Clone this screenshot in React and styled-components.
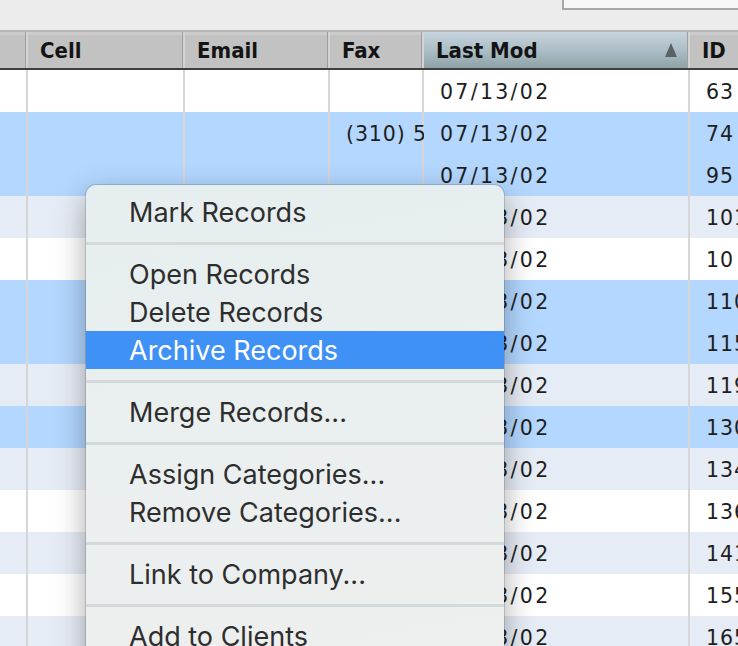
import React from 'react';
import styled, { createGlobalStyle } from 'styled-components';

const Global = createGlobalStyle`
  html, body { margin: 0; padding: 0; background: #ececec; }
  #root { width: 738px; height: 646px; }
`;

const COLS = '28px 157px 145px 94px 266px 1fr';

const Page = styled.div`
  position: relative;
  width: 738px;
  height: 646px;
  overflow: hidden;
  background: #ececec;
  display: flex;
  flex-direction: column;
`;

const TopBar = styled.div`
  flex: none;
  height: 30px;
  display: flex;
  justify-content: flex-end;
  align-items: flex-start;
`;

const SearchBox = styled.div`
  width: 176px;
  height: 10px;
  box-sizing: border-box;
  background: #f7f7f7;
  border-left: 2px solid #a7a7a7;
  border-bottom: 2px solid #a7a7a7;
`;

const HeaderRow = styled.div`
  flex: none;
  display: grid;
  grid-template-columns: ${COLS};
  height: 40px;
  box-sizing: border-box;
  border-top: 2px solid #b5b5b5;
  border-bottom: 2px solid #3e3e3e;
`;

const HeaderCell = styled.div`
  display: flex;
  align-items: center;
  justify-content: space-between;
  padding: 0 13px 0 12px;
  overflow: hidden;
  white-space: nowrap;
  font-family: "DejaVu Sans Condensed", "DejaVu Sans", sans-serif;
  font-weight: bold;
  font-size: 22px;
  color: #141414;
  background: ${p => p.$active
    ? 'linear-gradient(#c7d3dd, #a9bcc5 55%, #8ea2a6)'
    : 'linear-gradient(#cbcbcb 0, #cbcbcb 3px, #c2c2c2 3px)'};
  box-shadow: ${p => p.$last ? 'none' : 'inset -2px 0 0 #d3d3d3, inset -3px 0 0 #9e9e9e'};
`;

const SortArrow = styled.span`
  width: 0;
  height: 0;
  border-left: 6.5px solid transparent;
  border-right: 6.5px solid transparent;
  border-bottom: 14px solid #5b6265;
  margin-top: -1px;
`;

const Body = styled.div`
  flex: 1;
  background: #ffffff;
`;

const rowBg = { white: '#ffffff', alt: '#e6ecf5', sel: '#b3d7ff' };

const Row = styled.div`
  display: grid;
  grid-template-columns: ${COLS};
  height: 42px;
  background: ${p => rowBg[p.$kind]};
`;

const Cell = styled.div`
  padding: 2px 0 0 16px;
  box-sizing: border-box;
  overflow: hidden;
  white-space: nowrap;
  line-height: 40px;
  font-family: "DejaVu Sans", sans-serif;
  font-size: 20.5px;
  letter-spacing: ${p => p.$wide ? '2.3px' : '0.9px'};
  color: #1e1e1e;
  box-shadow: ${p => p.$last ? 'none' : 'inset -2px 0 0 #d6d6d6'};
`;

const Menu = styled.div`
  position: absolute;
  left: 86px;
  top: 185px;
  width: 418px;
  height: 520px;
  box-sizing: border-box;
  padding-top: 8px;
  border-radius: 10px;
  background: linear-gradient(170deg, #e6eeef 0%, #eaefef 45%, #efefef 100%);
  box-shadow: 0 0 0 1px rgba(0, 0, 0, 0.14), 0 10px 30px rgba(0, 0, 0, 0.34);
  font-family: Inter, "Open Sans", sans-serif;
`;

const MenuItem = styled.div`
  height: 38px;
  line-height: 40px;
  padding-left: 43px;
  font-size: 27px;
  white-space: nowrap;
  overflow: hidden;
  color: ${p => p.$active ? '#ffffff' : '#2e2e2e'};
  background: ${p => p.$active ? '#3f91f6' : 'transparent'};
`;

const Separator = styled.div`
  height: 3px;
  margin: 11px 0 10px;
  background: #d3d9da;
`;

const ids = ['63', '74', '95', '101', '10', '110', '115', '119', '130', '134', '136', '141', '155', '165'];
const selected = new Set([1, 2, 5, 6, 8]);

const rows = ids.map((id, i) => ({
  id,
  fax: i === 1 ? '(310) 555-0148' : '',
  mod: '07/13/02',
  kind: selected.has(i) ? 'sel' : (i % 2 === 1 ? 'alt' : 'white'),
}));

const menu = [
  ['Mark Records'],
  ['Open Records', 'Delete Records', 'Archive Records'],
  ['Merge Records...'],
  ['Assign Categories...', 'Remove Categories...'],
  ['Link to Company...'],
  ['Add to Clients', 'Add to Prospects'],
];

export default function App() {
  return (
    <Page>
      <Global />
      <TopBar>
        <SearchBox />
      </TopBar>
      <HeaderRow>
        <HeaderCell />
        <HeaderCell>Cell</HeaderCell>
        <HeaderCell>Email</HeaderCell>
        <HeaderCell>Fax</HeaderCell>
        <HeaderCell $active>Last Mod<SortArrow /></HeaderCell>
        <HeaderCell $last>ID</HeaderCell>
      </HeaderRow>
      <Body>
        {rows.map((r, i) => (
          <Row key={i} $kind={r.kind}>
            <Cell />
            <Cell />
            <Cell />
            <Cell>{r.fax}</Cell>
            <Cell $wide>{r.mod}</Cell>
            <Cell $last>{r.id}</Cell>
          </Row>
        ))}
      </Body>
      <Menu>
        {menu.map((group, gi) => (
          <React.Fragment key={gi}>
            {gi > 0 && <Separator />}
            {group.map(label => (
              <MenuItem key={label} $active={label === 'Archive Records'}>{label}</MenuItem>
            ))}
          </React.Fragment>
        ))}
      </Menu>
    </Page>
  );
}
